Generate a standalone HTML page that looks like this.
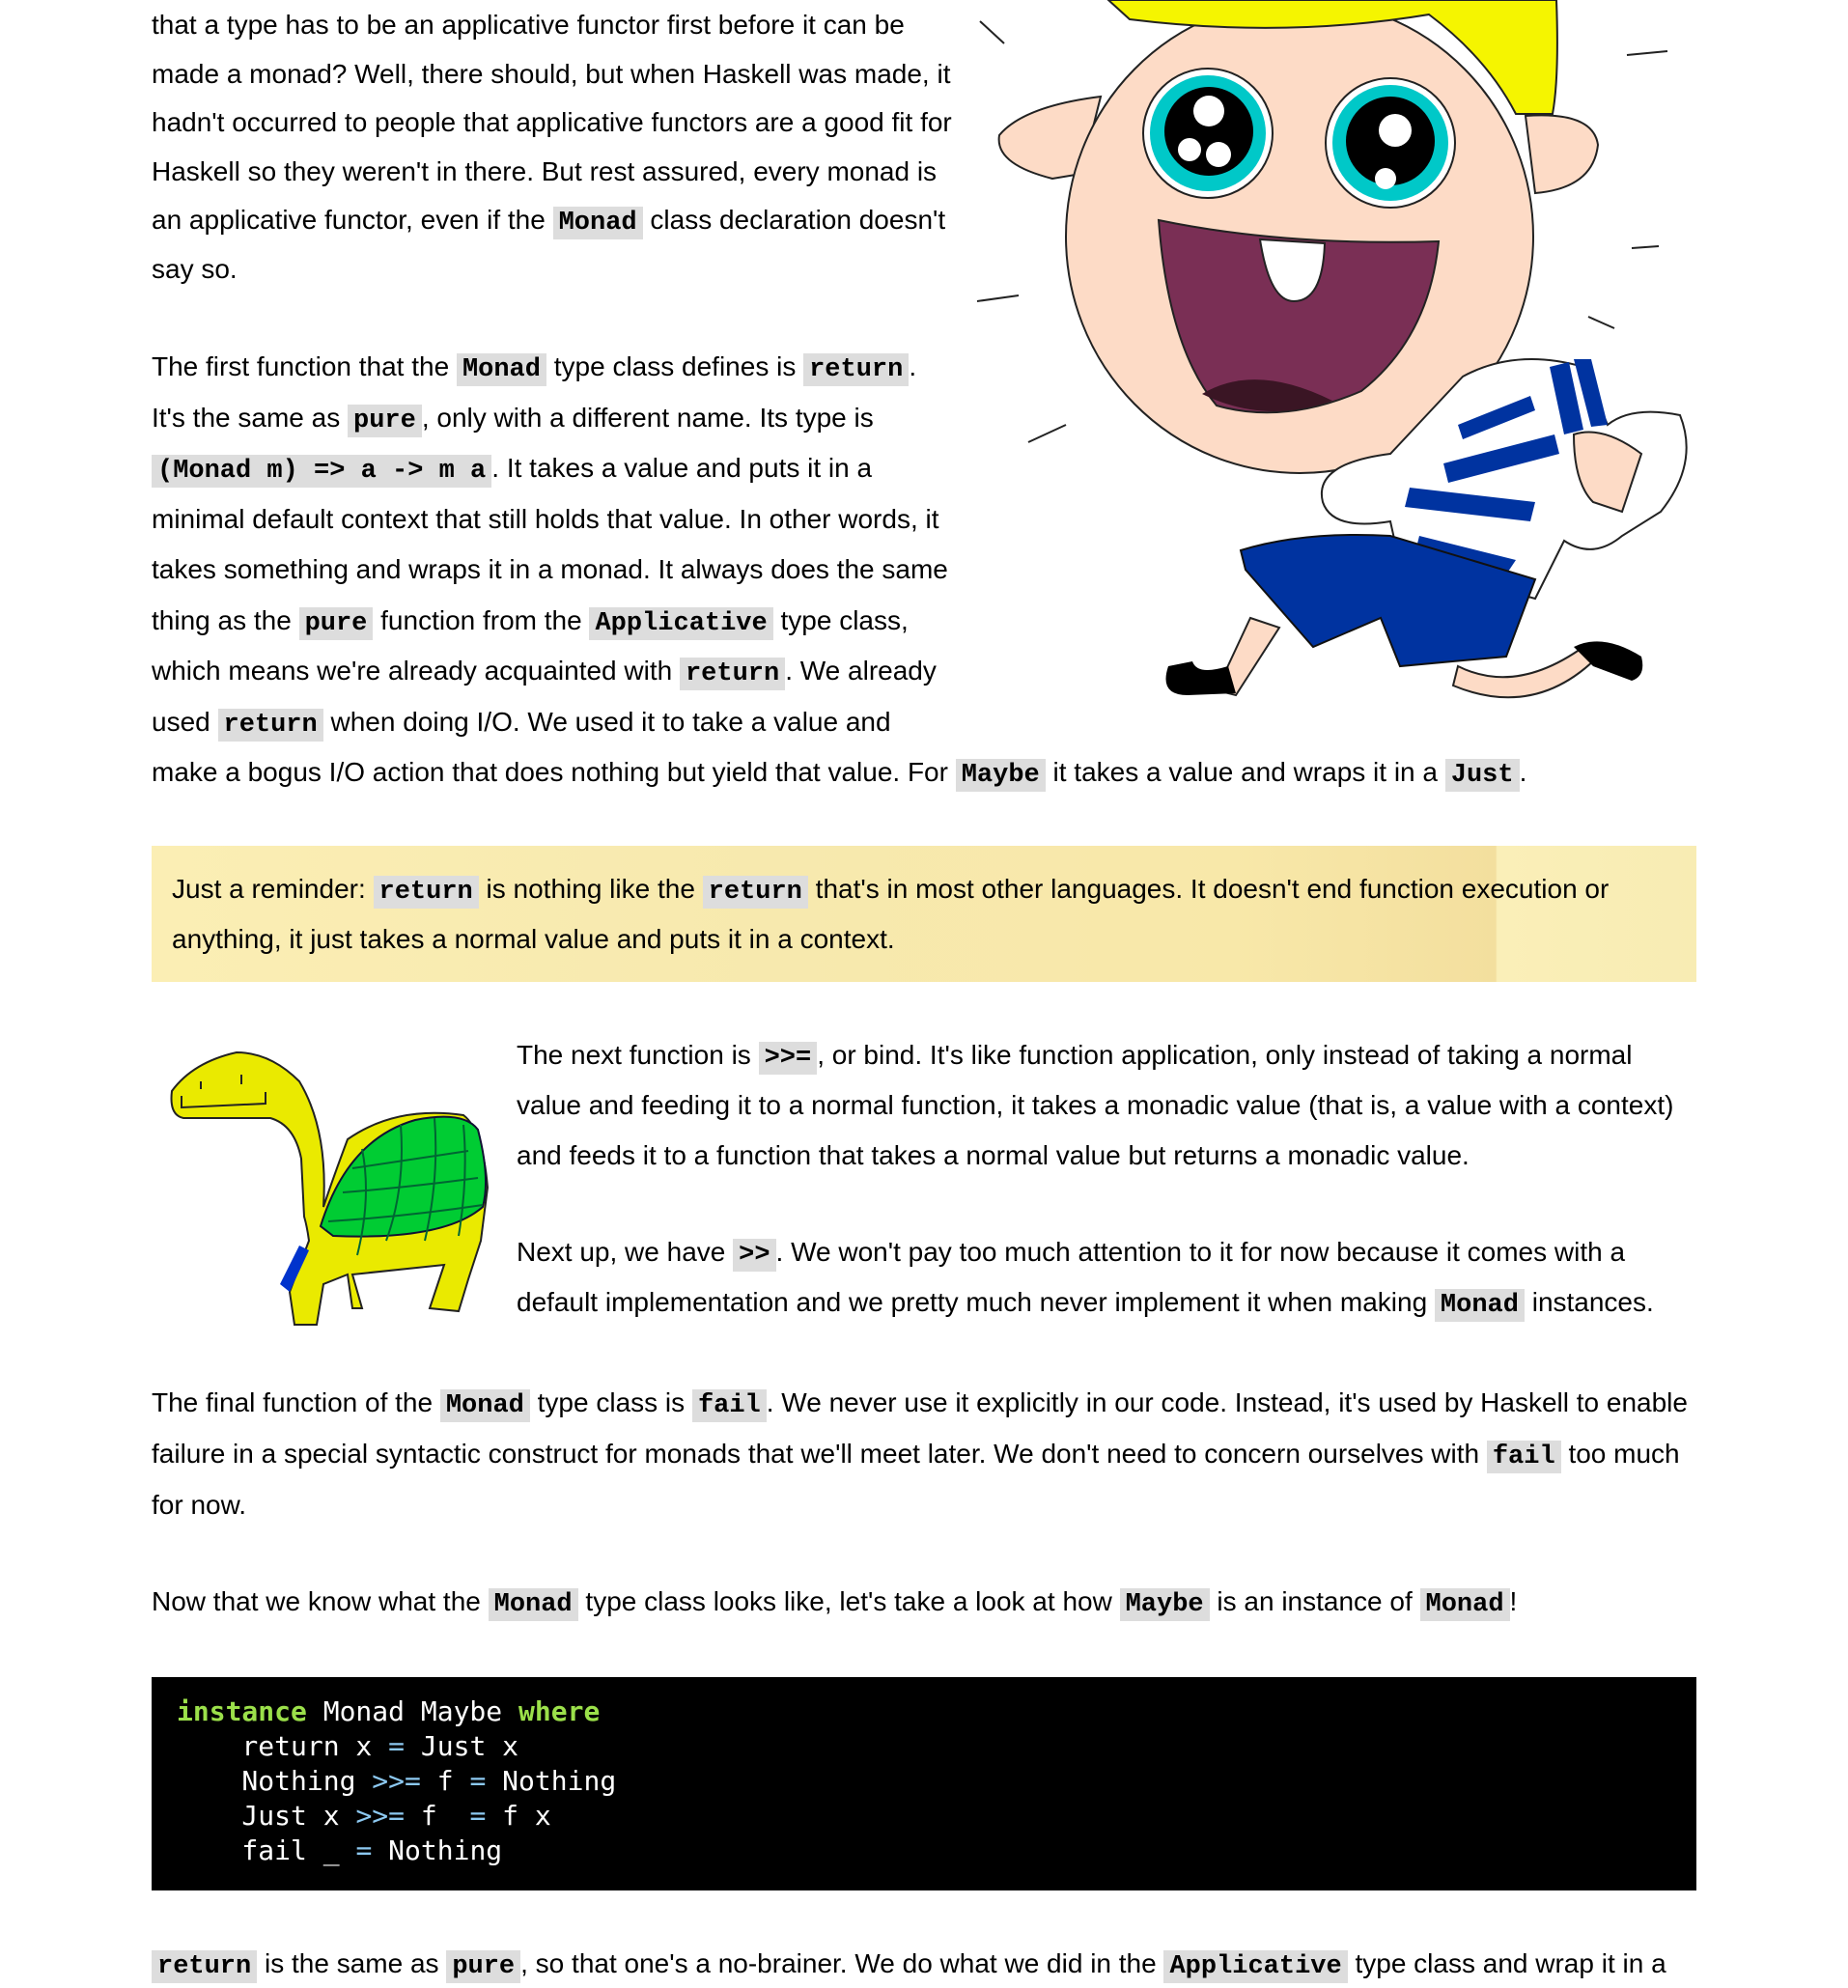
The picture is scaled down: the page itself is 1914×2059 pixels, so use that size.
<!DOCTYPE html>
<html><head><meta charset="utf-8"><style>
body{margin:0;width:1914px;height:2048px;background:#fff;position:relative;overflow:hidden;font-family:"Liberation Sans",Arial,sans-serif;font-size:28px;color:#000}
.p{position:absolute;left:157px;line-height:51px;white-space:nowrap}
code{font-family:"Liberation Mono",monospace;font-weight:bold;background:#ddd;padding:2px 6px;font-size:27px;line-height:1}
.note{position:absolute;left:157px;top:876px;width:1600px;height:141px;background:linear-gradient(90deg,#fbeeb4 0%,#f7e9ae 40%,#f8e8a9 70%,#f3df9e 87%,#faefb8 87.1%,#f8ecb3 100%)}
pre{position:absolute;left:157px;top:1737px;width:1600px;height:221px;margin:0;background:#000;color:#fff;font-family:"DejaVu Sans Mono",monospace;font-size:28px;line-height:36px;padding:18px 0 0 26px;box-sizing:border-box}
.k{color:#9be04a;font-weight:bold}.o{color:#8cc8f0}
</style></head><body>
<div class="p" style="top:1px;line-height:50.5px">that a type has to be an applicative functor first before it can be<br>made a monad? Well, there should, but when Haskell was made, it<br>hadn't occurred to people that applicative functors are a good fit for<br>Haskell so they weren't in there. But rest assured, every monad is<br>an applicative functor, even if the <code>Monad</code> class declaration doesn't<br>say so.</div>

<svg style="position:absolute;left:1000px;top:0" width="760" height="730" viewBox="0 0 760 730">
<g fill="none" stroke="#222" stroke-width="2"><path d="M15 22 L40 45"/><path d="M685 57 L727 53"/><path d="M690 257 L718 255"/><path d="M12 312 L55 306"/><path d="M645 328 L672 340"/><path d="M65 458 L104 440"/></g>
<path d="M140 100 Q60 110 35 140 Q30 170 90 185 L120 180 Z" fill="#fddbc6" stroke="#222" stroke-width="2"/>
<path d="M580 120 Q650 115 655 150 Q650 195 590 200 Z" fill="#fddbc6" stroke="#222" stroke-width="2"/>
<ellipse cx="346" cy="245" rx="242" ry="245" fill="#fddbc6" stroke="#222" stroke-width="2"/>
<path d="M148 0 L612 0 Q615 80 608 118 L570 118 Q540 60 480 15 Q330 40 170 20 Z" fill="#f5f500" stroke="#222" stroke-width="2"/>
<circle cx="251" cy="138" r="67" fill="#fff" stroke="#222" stroke-width="2"/><circle cx="251" cy="138" r="60" fill="#00c8c8"/><circle cx="252" cy="136" r="46" fill="#000"/>
<circle cx="252" cy="115" r="16" fill="#fff"/><circle cx="232" cy="155" r="12" fill="#fff"/><circle cx="262" cy="160" r="13" fill="#fff"/>
<circle cx="440" cy="148" r="67" fill="#fff" stroke="#222" stroke-width="2"/><circle cx="440" cy="148" r="60" fill="#00c8c8"/><circle cx="440" cy="146" r="46" fill="#000"/>
<circle cx="445" cy="135" r="17" fill="#fff"/><circle cx="435" cy="185" r="11" fill="#fff"/>
<path d="M200 228 Q330 255 490 250 Q480 350 410 405 Q330 440 260 420 Q210 360 200 228 Z" fill="#7a2f55" stroke="#222" stroke-width="2"/>
<path d="M245 408 Q300 375 380 415 Q310 440 245 408 Z" fill="#3a1524"/>
<path d="M305 248 L372 252 Q370 312 340 312 Q315 312 305 248 Z" fill="#fff" stroke="#222" stroke-width="2"/>
<path d="M515 390 Q570 360 640 380 L665 440 Q690 420 740 430 Q760 480 720 530 L680 555 Q650 580 620 560 L590 620 Q520 600 450 585 L440 540 Q380 550 370 520 Q360 480 440 470 Z" fill="#fff" stroke="#222" stroke-width="2"/>
<g fill="#0033a0"><path d="M510 440 L585 410 L590 425 L515 455Z"/><path d="M495 480 L610 450 L615 470 L500 500Z"/><path d="M460 505 L590 520 L585 540 L455 525Z"/><path d="M470 555 L570 580 L560 595 L465 575Z"/><path d="M605 380 L625 375 L640 445 L620 450Z"/><path d="M630 372 L648 372 L665 440 L648 442Z"/></g>
<path d="M630 450 Q660 440 700 470 Q690 500 680 530 L650 520 Q630 500 630 450 Z" fill="#fddbc6" stroke="#222" stroke-width="2"/>
<path d="M285 570 Q350 550 440 555 L590 600 L560 680 L450 690 L430 640 L360 670 L290 590 Z" fill="#0033a0" stroke="#111" stroke-width="2"/>
<path d="M295 640 L325 650 L280 720 L260 715 Z" fill="#fddbc6" stroke="#222" stroke-width="2"/>
<path d="M510 690 Q570 720 640 670 L655 680 Q590 745 505 710 Z" fill="#fddbc6" stroke="#222" stroke-width="2"/>
<path d="M210 690 Q200 720 230 720 L280 718 L272 690 Q240 700 235 685 Z" fill="#000"/>
<path d="M630 670 Q660 655 700 680 Q705 700 690 705 L650 690 Z" fill="#000"/>
</svg>

<div class="p" style="top:354px;line-height:52.5px">The first function that the <code>Monad</code> type class defines is <code>return</code>.<br>It's the same as <code>pure</code>, only with a different name. Its type is<br><code>(Monad m) =&gt; a -&gt; m a</code>. It takes a value and puts it in a<br>minimal default context that still holds that value. In other words, it<br>takes something and wraps it in a monad. It always does the same<br>thing as the <code>pure</code> function from the <code>Applicative</code> type class,<br>which means we're already acquainted with <code>return</code>. We already<br>used <code>return</code> when doing I/O. We used it to take a value and<br>make a bogus I/O action that does nothing but yield that value. For <code>Maybe</code> it takes a value and wraps it in a <code>Just</code>.</div>

<div class="note"></div>
<div class="p" style="top:895px;left:178px;line-height:52px">Just a reminder: <code>return</code> is nothing like the <code>return</code> that's in most other languages. It doesn't end function execution or<br>anything, it just takes a normal value and puts it in a context.</div>

<svg style="position:absolute;left:160px;top:1070px" width="370" height="320" viewBox="0 0 370 320">
<path d="M85 20 Q40 30 18 60 Q15 85 30 88 L120 88 Q145 95 152 130 L155 190 Q158 200 160 215 L140 268 L145 302 L168 302 L175 260 L200 250 L205 285 L215 285 L205 250 L300 240 L285 285 L315 288 L325 255 L338 215 L345 160 Q340 100 320 85 Q250 75 200 110 Q185 150 175 180 Q180 100 150 50 Q120 20 85 20 Z" fill="#eaea00" stroke="#222" stroke-width="2"/>
<path d="M172 200 Q200 110 270 90 Q320 80 335 100 Q348 150 340 180 Q300 215 185 210 Z" fill="#00cc33" stroke="#113" stroke-width="2"/>
<g fill="none" stroke="#063" stroke-width="2"><path d="M205 140 Q270 130 325 122"/><path d="M195 165 Q260 160 335 150"/><path d="M180 195 Q260 190 340 178"/><path d="M215 120 Q225 170 210 230"/><path d="M255 95 Q260 160 240 215"/><path d="M290 88 Q295 150 280 215"/><path d="M320 95 Q325 150 315 210"/></g>
<path d="M150 220 L130 260 L140 268 L160 225 Z" fill="#0033cc"/>
<g stroke="#222" stroke-width="2"><path d="M48 50 v8"/><path d="M90 43 v10"/><path d="M28 65 v12 L115 73 v-12" fill="none"/></g>
</svg>

<div class="p" style="top:1067px;left:535px;line-height:52px">The next function is <code>&gt;&gt;=</code>, or bind. It's like function application, only instead of taking a normal<br>value and feeding it to a normal function, it takes a monadic value (that is, a value with a context)<br>and feeds it to a function that takes a normal value but returns a monadic value.</div>
<div class="p" style="top:1271px;left:535px;line-height:52px">Next up, we have <code>&gt;&gt;</code>. We won't pay too much attention to it for now because it comes with a<br>default implementation and we pretty much never implement it when making <code>Monad</code> instances.</div>
<div class="p" style="top:1426px;line-height:53px">The final function of the <code>Monad</code> type class is <code>fail</code>. We never use it explicitly in our code. Instead, it's used by Haskell to enable<br>failure in a special syntactic construct for monads that we'll meet later. We don't need to concern ourselves with <code>fail</code> too much<br>for now.</div>
<div class="p" style="top:1633px">Now that we know what the <code>Monad</code> type class looks like, let's take a look at how <code>Maybe</code> is an instance of <code>Monad</code>!</div>

<pre><span class="k">instance</span> Monad Maybe <span class="k">where</span>
    return x <span class="o">=</span> Just x
    Nothing <span class="o">&gt;&gt;=</span> f <span class="o">=</span> Nothing
    Just x <span class="o">&gt;&gt;=</span> f  <span class="o">=</span> f x
    fail _ <span class="o">=</span> Nothing</pre>

<div class="p" style="top:2008px"><code>return</code> is the same as <code>pure</code>, so that one's a no-brainer. We do what we did in the <code>Applicative</code> type class and wrap it in a</div>
</body></html>
